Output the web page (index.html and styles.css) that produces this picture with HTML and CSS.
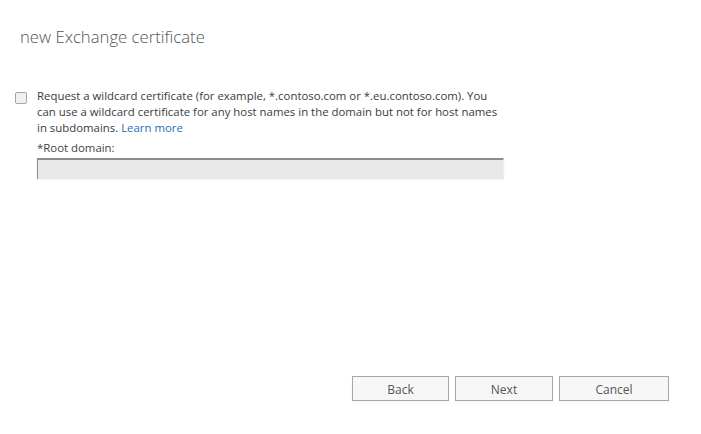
FILE: index.html
```html
<!DOCTYPE html>
<html>
<head>
<meta charset="utf-8">
<link rel="stylesheet" href="styles.css">
</head>
<body>
<div class="page">
  <h1 class="title">new Exchange certificate</h1>
  <div class="option">
    <span class="checkbox"></span>
    <div class="option-body">
      <p class="desc">Request a wildcard certificate (for example, *.contoso.com or *.eu.contoso.com). You can use a wildcard certificate for any host names in the domain but not for host names in subdomains. <a class="link" href="#">Learn more</a></p>
      <label class="field-label">*Root domain:</label>
      <div class="input"></div>
    </div>
  </div>
  <div class="spacer"></div>
  <div class="buttons">
    <button class="btn btn-back">Back</button>
    <button class="btn btn-next">Next</button>
    <button class="btn btn-cancel">Cancel</button>
  </div>
</div>
</body>
</html>
```
FILE: styles.css
```css
html, body {
  margin: 0;
  padding: 0;
  background: #ffffff;
}
body {
  font-family: "Segoe UI", "Open Sans", "Noto Sans", sans-serif;
  color: #333333;
  width: 701px;
  height: 434px;
  overflow: hidden;
}
.page {
  display: flex;
  flex-direction: column;
  height: 434px;
  box-sizing: border-box;
  padding: 26px 0 0 0;
}
.title {
  margin: 0 0 0 20px;
  font-weight: 300;
  font-size: 16.7px;
  line-height: 22px;
  color: #555555;
}
.option {
  display: flex;
  margin-top: 40px;
  padding-left: 15px;
}
.checkbox {
  width: 10px;
  height: 10px;
  border: 1px solid #a6a6a6;
  border-radius: 2px;
  background: #f0f0f0;
  margin-top: 4px;
  flex: none;
}
.option-body {
  margin-left: 10px;
  width: 466px;
}
.desc {
  margin: 0;
  font-size: 11.4px;
  line-height: 16px;
  color: #3b3b3b;
}
.link {
  color: #1a6fb5;
  text-decoration: none;
}
.field-label {
  display: block;
  margin-top: 4px;
  font-size: 11.4px;
  line-height: 16px;
  color: #444444;
}
.input {
  margin-top: 2px;
  width: 465px;
  height: 19px;
  background: #e8e8e8;
  border-top: 2px solid #8d8d8d;
  border-left: 1px solid #8d8d8d;
  border-right: 1px solid #eeeeee;
  box-shadow: 0 1px 2px rgba(0,0,0,0.06);
}
.spacer {
  flex: 1;
}
.buttons {
  display: flex;
  gap: 6px;
  padding-left: 352px;
  margin-bottom: 33px;
}
.btn {
  height: 25px;
  box-sizing: border-box;
  border: 1px solid #a8a8a8;
  background: #f7f7f7;
  color: #555555;
  font-family: "Segoe UI", "Open Sans", "Noto Sans", sans-serif;
  font-size: 12px;
  padding: 2px 0 0 0;
  box-shadow: 0 2px 3px rgba(0,0,0,0.04);
}
.btn-back { width: 97px; }
.btn-next { width: 98px; }
.btn-cancel { width: 110px; }
```
